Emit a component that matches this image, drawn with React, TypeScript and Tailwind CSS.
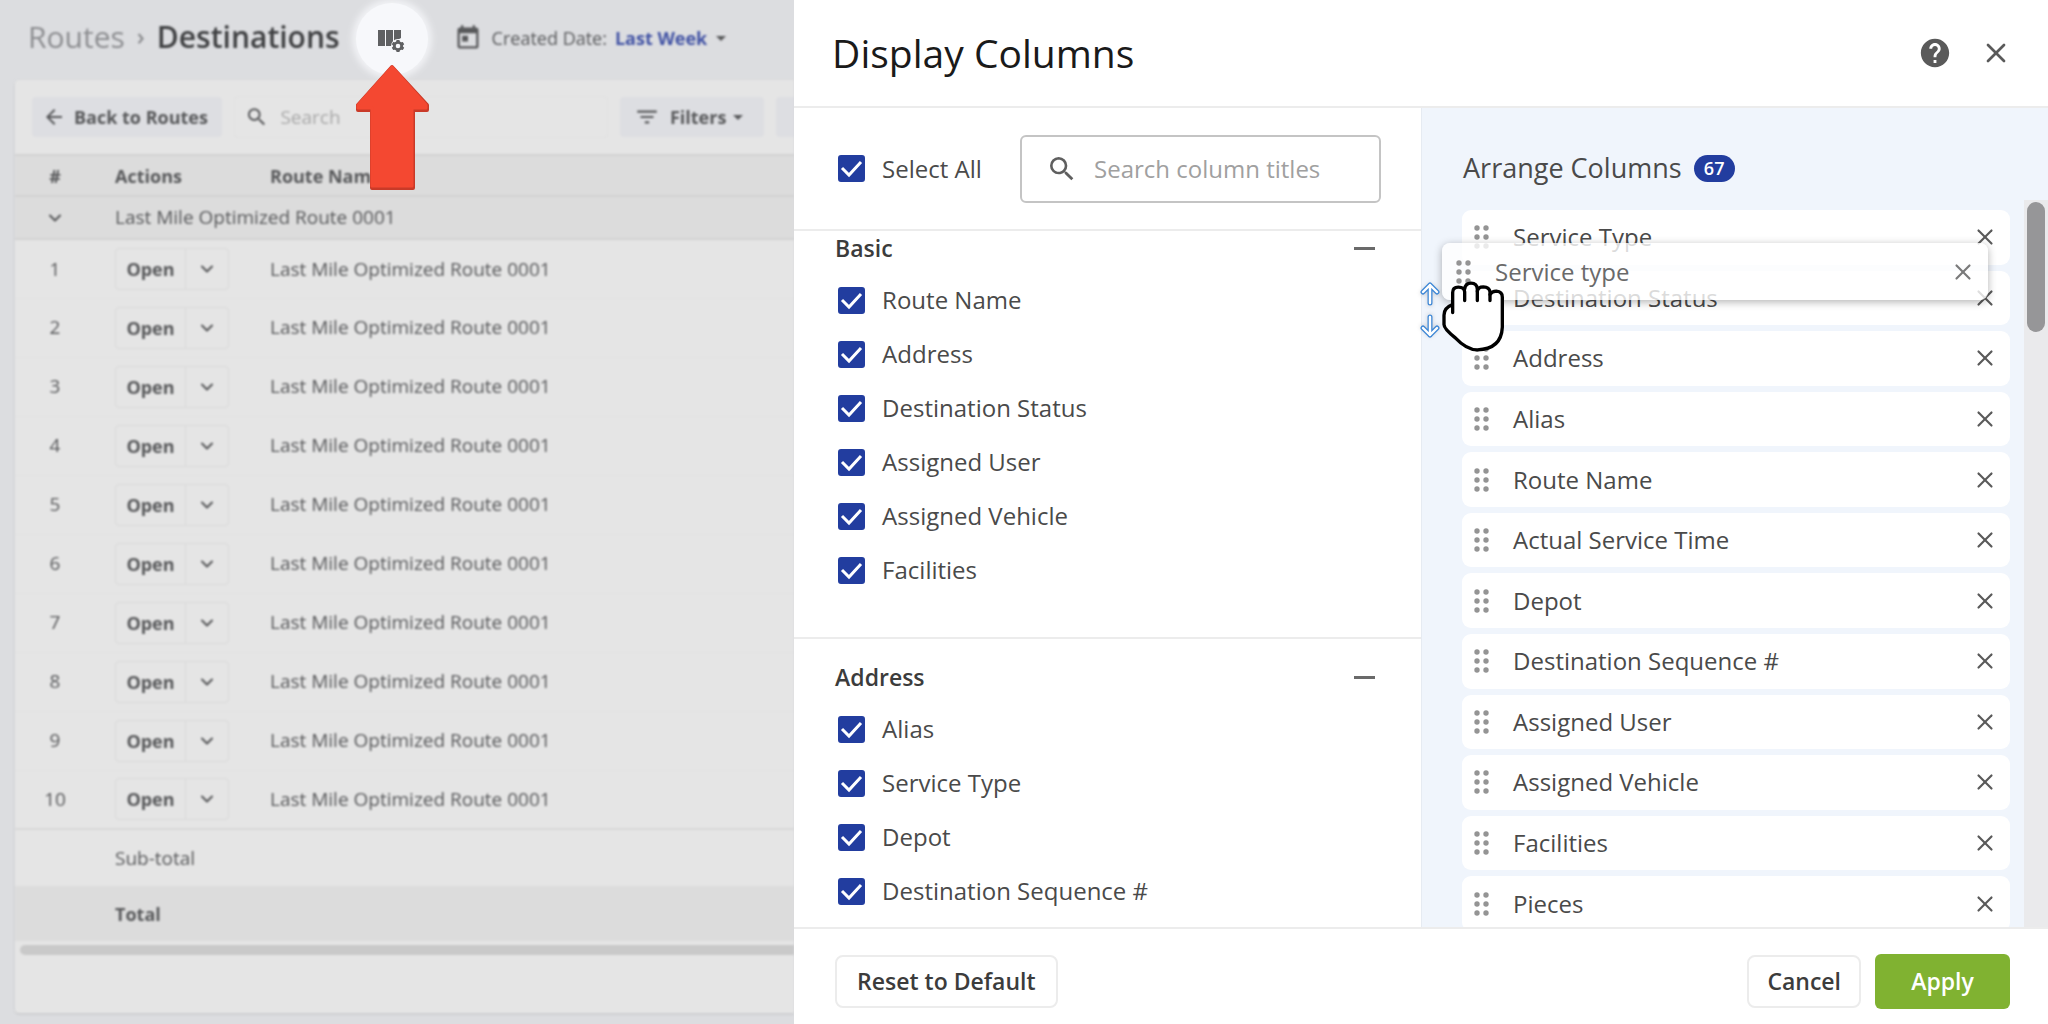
import { useState } from "react";
import { ChevronDown, X } from "lucide-react";
import {
  MdArrowBack,
  MdArrowDropDown,
  MdFilterList,
  MdHelp,
  MdSearch,
  MdToday,
} from "react-icons/md";

type Section = {
  title: string;
  columns: string[];
};

const sections: Section[] = [
  {
    title: "Basic",
    columns: [
      "Route Name",
      "Address",
      "Destination Status",
      "Assigned User",
      "Assigned Vehicle",
      "Facilities",
    ],
  },
  {
    title: "Address",
    columns: ["Alias", "Service Type", "Depot", "Destination Sequence #"],
  },
];

const arranged = [
  "Service Type",
  "Destination Status",
  "Address",
  "Alias",
  "Route Name",
  "Actual Service Time",
  "Depot",
  "Destination Sequence #",
  "Assigned User",
  "Assigned Vehicle",
  "Facilities",
  "Pieces",
];

const routes = [1, 2, 3, 4, 5, 6, 7, 8, 9, 10];

const ColumnsGearIcon = () => (
  <svg viewBox="0 0 28 24" className="h-6 w-7" fill="#5f6062">
    <path d="M0 1h7v16H0zM8 1h7v16H8zM16 1h7v8l-7 4z" />
    <circle cx="20" cy="17" r="7" fill="#f7f8fb" />
    <g transform="translate(20 17)">
      <path
        fillRule="evenodd"
        d="M-1.4-6h2.8l.5 1.6 1.2.7 1.7-.4 1.4 2.4L5-.6v1.2l1.2 1.1-1.4 2.4-1.7-.4-1.2.7-.5 1.6h-2.8l-.5-1.6-1.2-.7-1.7.4-1.4-2.4L-5 .6V-.6l-1.2-1.1 1.4-2.4 1.7.4 1.2-.7zM0-2.3a2.3 2.3 0 1 0 0 4.6 2.3 2.3 0 0 0 0-4.6z"
      />
    </g>
  </svg>
);

const DragDots = () => (
  <svg viewBox="0 0 15 24" className="h-6 w-[15px] shrink-0" fill="#949494">
    {[3, 12, 21].map((y) => (
      <g key={y}>
        <circle cx="3" cy={y} r="2.7" />
        <circle cx="12" cy={y} r="2.7" />
      </g>
    ))}
  </svg>
);

const GrabHand = () => (
  <svg
    viewBox="96 182 186 212"
    className="h-[71px] w-[62px]"
    fill="none"
    stroke="#000"
    strokeWidth="10"
    strokeLinecap="round"
    strokeLinejoin="round"
  >
    <path
      fill="#fff"
      stroke="none"
      d="M128 216Q128 200 145 200Q156 200 164 206Q166 188 183 188Q199 188 202 204Q208 198 220 199Q234 200 240 214Q248 210 260 212Q277 214 277 230V320Q274 386 202 388Q170 388 136 352Q102 325 102 312V284Q102 262 128 252Z"
    />
    <path d="M128 276V216Q128 200 145 200Q163 200 164 214V240" />
    <path d="M164 206Q166 188 183 188Q201 188 202 206V240" />
    <path d="M202 212Q204 199 220 199Q238 200 240 214V240" />
    <path d="M240 222Q246 212 259 212Q277 213 277 230V320Q274 386 202 388Q170 388 136 352Q102 325 102 312V284Q102 262 126 253" />
  </svg>
);

const MoveArrow = ({ down }: { down?: boolean }) => (
  <svg
    viewBox="0 0 20 24"
    className={`h-6 w-5 drop-shadow-sm ${down ? "rotate-180" : ""}`}
    fill="none"
    strokeLinecap="round"
    strokeLinejoin="round"
  >
    <path d="M10 21V3M3 10l7-7 7 7" stroke="#3f88d6" strokeWidth="5" />
    <path d="M10 21V3M3 10l7-7 7 7" stroke="#fff" strokeWidth="2.4" />
  </svg>
);

const PointerArrow = () => (
  <svg viewBox="0 0 76 128" className="h-32 w-[76px]" strokeLinejoin="round">
    <path
      d="M37 3L3 41v5h14v78h41V46h14v-5z"
      fill="#c93a28"
      stroke="#c93a28"
      strokeWidth="4"
    />
    <path
      d="M37 3L3 41v3h14v78h40V44h14v-3z"
      fill="#f44831"
      stroke="#f44831"
      strokeWidth="3"
    />
  </svg>
);

type CheckProps = {
  label: string;
  checked: boolean;
  onChange: () => void;
};

const Check = ({ label, checked, onChange }: CheckProps) => (
  <label className="flex cursor-pointer items-center gap-[17px] text-2xl text-[#4a4a4a]">
    <span className="relative flex">
      <input
        type="checkbox"
        checked={checked}
        onChange={onChange}
        className="h-[27px] w-[27px] appearance-none rounded-[3px] border-2 border-[#223d9f] checked:bg-[#223d9f]"
      />
      {checked && (
        <svg
          viewBox="0 0 27 27"
          className="pointer-events-none absolute inset-0"
          fill="none"
          stroke="#fff"
          strokeWidth="3"
        >
          <path d="M4 13l7 7L23 7" />
        </svg>
      )}
    </span>
    {label}
  </label>
);

const RoutesPage = () => (
  <div className="relative min-w-0 overflow-hidden bg-[#dcdde0]">
    <div className="flex h-full flex-col pb-[11px] pl-[15px] text-[#58595b] blur-[1px]">
      <header className="flex h-20 items-center pb-2 pl-[13px] whitespace-nowrap">
        <h1 className="flex items-center gap-3 text-[30px] text-[#8c8d90]">
          Routes
          <span className="text-2xl font-semibold">›</span>
          <span className="font-semibold text-[#3f4042]">Destinations</span>
        </h1>
        <button className="ml-[114px] flex items-center pt-1 text-lg">
          <MdToday className="mr-2.5 h-7 w-7" />
          Created Date:
          <span className="ml-2 font-bold text-[#4253a4]">Last Week</span>
          <MdArrowDropDown className="ml-0.5 h-6 w-6" />
        </button>
      </header>

      <div className="flex flex-1 flex-col rounded-l bg-[#e5e5e5] shadow">
        <div className="flex h-[74px] items-center pl-[17px] whitespace-nowrap">
          <a
            href="#"
            className="flex h-10 items-center gap-2 rounded bg-[#dddee2] pr-3.5 pl-2.5 text-lg font-bold"
          >
            <MdArrowBack className="h-6 w-6" />
            Back to Routes
          </a>
          <label className="ml-3 flex h-[42px] flex-1 items-center gap-3 rounded border border-[#e1e1e1] pl-2.5">
            <MdSearch className="h-[26px] w-[26px]" />
            <input
              type="text"
              placeholder="Search"
              aria-label="Search routes"
              className="w-full min-w-0 bg-transparent text-[19px] outline-none placeholder:text-[#a9a9a9]"
            />
          </label>
          <button className="ml-3 flex h-10 w-36 items-center justify-center gap-2.5 rounded bg-[#dddee2] text-lg font-bold">
            <MdFilterList className="h-[26px] w-[26px]" />
            <span className="flex items-center">
              Filters
              <MdArrowDropDown className="h-6 w-6" />
            </span>
          </button>
          <span className="ml-3 h-10 w-[18px] rounded-l bg-[#dddee2]" />
        </div>

        <table className="w-full table-fixed border-collapse text-left text-[19px]">
          <thead>
            <tr className="h-[41px] border-y-2 border-[#d2d2d2] bg-[#dcdcdc] text-lg">
              <th className="w-20 text-center font-bold">#</th>
              <th className="w-[155px] pl-5 font-bold">Actions</th>
              <th className="pl-5 font-bold">Route Name</th>
            </tr>
          </thead>
          <tbody>
            <tr className="h-[43px] border-b-2 border-[#d2d2d2] bg-[#dcdcdc]">
              <td>
                <ChevronDown className="mx-auto h-5 w-5" strokeWidth={2.5} />
              </td>
              <td colSpan={2} className="pl-5">
                Last Mile Optimized Route 0001
              </td>
            </tr>
            {routes.map((route) => (
              <tr key={route} className="h-[59px] border-b border-[#e1e1e1]">
                <td className="text-center">{route}</td>
                <td className="pl-5">
                  <div className="flex h-[42px] w-[114px] rounded border border-[#dadada]">
                    <button className="flex-1 text-lg font-bold">Open</button>
                    <button
                      aria-label="More actions"
                      className="flex w-[43px] items-center justify-center border-l border-[#dadada]"
                    >
                      <ChevronDown className="h-5 w-5" strokeWidth={2.5} />
                    </button>
                  </div>
                </td>
                <td className="pl-5">Last Mile Optimized Route 0001</td>
              </tr>
            ))}
          </tbody>
          <tfoot>
            <tr className="h-[57px] border-t-2 border-[#d8d8d8]">
              <td></td>
              <td colSpan={2} className="pl-5">
                Sub-total
              </td>
            </tr>
            <tr className="h-[55px] bg-[#dcdcdc]">
              <td></td>
              <td colSpan={2} className="pl-5 text-lg font-bold">
                Total
              </td>
            </tr>
          </tfoot>
        </table>
        <div className="mt-1 ml-[5px] h-2.5 rounded-l-full bg-[#c9c9c9]" />
      </div>
    </div>

    <button
      aria-label="Display columns"
      className="absolute top-[3px] left-[356px] flex h-[72px] w-[72px] items-center justify-center rounded-full bg-[#f7f8fb] pt-1 shadow-[0_0_6px_4px_#f1f2f5]"
    >
      <ColumnsGearIcon />
    </button>
    <div className="absolute top-16 left-[355px]">
      <PointerArrow />
    </div>
  </div>
);

const App = () => {
  const [hidden, setHidden] = useState<string[]>([]);
  const [search, setSearch] = useState("");

  const allColumns = sections.flatMap((section) => section.columns);

  const toggle = (column: string) => {
    setHidden(
      hidden.includes(column)
        ? hidden.filter((item) => item !== column)
        : [...hidden, column]
    );
  };

  return (
    <div className="grid min-h-screen grid-cols-[19fr_30fr] font-['Open_Sans',sans-serif]">
      <RoutesPage />

      <section className="flex min-w-0 flex-col bg-white">
        <header className="flex h-[108px] items-center justify-between border-b-2 border-[#ececec] pr-9 pl-[38px]">
          <h2 className="text-[39px] text-[#1a1a1a]">Display Columns</h2>
          <div className="flex items-center gap-7 text-[#5a5a5a]">
            <button aria-label="Help">
              <MdHelp className="h-[34px] w-[34px]" />
            </button>
            <button aria-label="Close">
              <X className="h-8 w-8" strokeWidth={2} />
            </button>
          </div>
        </header>

        <div className="grid flex-1 grid-cols-2">
          <div className="flex flex-col">
            <div className="flex h-[123px] items-center justify-between border-b-2 border-[#ececec] pr-10 pl-11">
              <Check
                label="Select All"
                checked={hidden.length === 0}
                onChange={() => setHidden(hidden.length ? [] : allColumns)}
              />
              <label className="flex h-[68px] w-[361px] items-center gap-4 rounded-md border-2 border-[#c4c4c4] pl-6">
                <MdSearch className="h-8 w-8 shrink-0 text-[#5f5f5f]" />
                <input
                  type="text"
                  aria-label="Search column titles"
                  placeholder="Search column titles"
                  value={search}
                  onChange={(e) => setSearch(e.target.value)}
                  className="w-full min-w-0 text-2xl outline-none placeholder:text-[#a0a0a0]"
                />
              </label>
            </div>
            {sections.map((section, index) => (
              <div
                key={section.title}
                className={
                  index === 0
                    ? "h-[408px] border-b-2 border-[#ececec]"
                    : "flex-1 pt-[21px]"
                }
              >
                <div className="flex h-[34px] items-center justify-between pr-[46px] pl-[41px]">
                  <h3 className="text-[23px] font-semibold text-[#3c3c3c]">
                    {section.title}
                  </h3>
                  <button
                    aria-label={`Collapse ${section.title}`}
                    className="flex h-6 items-center"
                  >
                    <span className="h-[3px] w-[21px] bg-[#6a6a6a]" />
                  </button>
                </div>
                <ul className="flex flex-col pt-2 pl-11">
                  {section.columns.map((column) => (
                    <li key={column} className="flex h-[54px] items-center">
                      <Check
                        label={column}
                        checked={!hidden.includes(column)}
                        onChange={() => toggle(column)}
                      />
                    </li>
                  ))}
                </ul>
              </div>
            ))}
          </div>

          <div className="flex flex-col border-l border-[#e6ebf2] bg-[#f0f5fc]">
            <div className="flex h-[92px] items-center gap-3 pt-7 pl-[41px]">
              <h3 className="text-[27px] text-[#4a4a4a]">Arrange Columns</h3>
              <span className="flex h-[27px] w-[41px] items-center justify-center rounded-full bg-[#223d9f] text-lg font-semibold text-white">
                67
              </span>
            </div>
            <div className="flex flex-1">
              <div className="relative flex flex-1 overflow-y-clip pt-2.5 pr-3.5 pl-10">
                <ul className="-mb-1 flex flex-1 flex-col gap-1.5">
                  {arranged.map((column) => (
                    <li
                      key={column}
                      className="flex min-h-[54px] flex-1 items-center rounded-[9px] bg-white px-3"
                    >
                      <DragDots />
                      <span className="flex-1 pl-6 text-2xl text-[#4a4a4a]">
                        {column}
                      </span>
                      <button aria-label={`Remove ${column}`}>
                        <X className="h-[26px] w-[26px] text-[#5a5a5a]" />
                      </button>
                    </li>
                  ))}
                </ul>

                {/* card being dragged */}
                <div className="absolute top-[43px] right-9 left-5 flex h-[57px] items-center rounded-lg bg-white/80 pr-3 pl-3.5 shadow-[0_2px_8px_rgba(0,0,0,0.3)]">
                  <DragDots />
                  <span className="flex-1 pl-6 text-2xl text-[#6a6a6a]">
                    Service type
                  </span>
                  <button aria-label="Remove Service type">
                    <X className="h-[26px] w-[26px] text-[#7a7a7a]" />
                  </button>
                </div>
                <div className="absolute top-[81px] left-5">
                  <GrabHand />
                </div>
                <div className="absolute top-[82px] -left-0.5 flex flex-col gap-2">
                  <MoveArrow />
                  <MoveArrow down />
                </div>
              </div>
              <div className="flex w-6 justify-center bg-[#eaeaec] pt-0.5">
                <div className="h-[130px] w-[18px] rounded-full bg-[#969698]" />
              </div>
            </div>
          </div>
        </div>

        <footer className="flex h-[97px] items-center gap-3.5 border-t-2 border-[#ececec] pt-2.5 pr-[38px] pl-[41px] text-[23px] font-semibold text-[#3c3c3c]">
          <button className="mr-auto h-[53px] rounded-lg border-2 border-[#ececec] px-5">
            Reset to Default
          </button>
          <button className="h-[53px] rounded-lg border-2 border-[#ececec] px-[18px]">
            Cancel
          </button>
          <button className="h-[55px] w-[135px] rounded-md bg-[#80b231] text-white">
            Apply
          </button>
        </footer>
      </section>
    </div>
  );
};

export default App;
